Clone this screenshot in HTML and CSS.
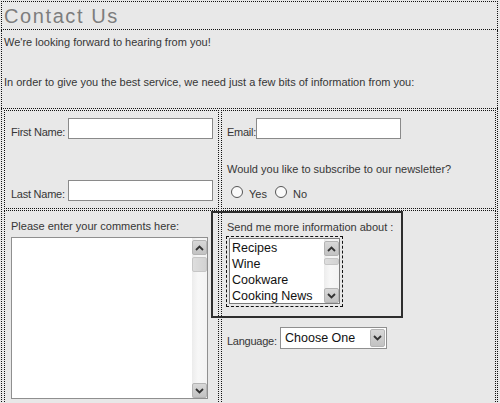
FILE: index.html
```html
<!DOCTYPE html>
<html lang="en">
<head>
<meta charset="utf-8">
<title>Contact Us</title>
<link rel="stylesheet" href="styles.css">
</head>
<body>
<div class="page">
  <div class="header"><h1 class="title">Contact Us</h1></div>
  <div class="intro">
    <p class="intro-line">We're looking forward to hearing from you!</p>
    <p class="intro-line second">In order to give you the best service, we need just a few bits of information from you:</p>
  </div>
  <div class="form-table">
    <div class="cell name-cell">
      <div class="field-row">
        <span class="label name-label">First Name:</span>
        <span class="text-input"></span>
      </div>
      <div class="field-row last-row">
        <span class="label name-label">Last Name:</span>
        <span class="text-input"></span>
      </div>
    </div>
    <div class="cell contact-cell">
      <div class="field-row">
        <span class="label email-label">Email:</span>
        <span class="text-input"></span>
      </div>
      <p class="label question">Would you like to subscribe to our newsletter?</p>
      <div class="radio-row">
        <span class="radio"></span><span class="label radio-text">Yes</span>
        <span class="radio second-radio"></span><span class="label radio-text">No</span>
      </div>
    </div>
    <div class="cell comments-cell">
      <p class="label">Please enter your comments here:</p>
      <div class="textarea">
        <div class="scrollbar">
          <span class="sb-btn"><svg width="9" height="6" viewBox="0 0 9 6"><polyline points="1,5 4.5,1.5 8,5" fill="none" stroke="#333" stroke-width="1.8"/></svg></span>
          <span class="sb-thumb"></span>
          <span class="sb-space"></span>
          <span class="sb-btn"><svg width="9" height="6" viewBox="0 0 9 6"><polyline points="1,1 4.5,4.5 8,1" fill="none" stroke="#333" stroke-width="1.8"/></svg></span>
        </div>
      </div>
    </div>
    <div class="cell info-cell">
      <div class="selection-box"></div>
      <p class="label">Send me more information about :</p>
      <div class="list-outline">
        <div class="listbox">
          <ul class="options">
            <li>Recipes</li>
            <li>Wine</li>
            <li>Cookware</li>
            <li>Cooking News</li>
          </ul>
          <div class="scrollbar list-sb">
            <span class="sb-btn"><svg width="9" height="6" viewBox="0 0 9 6"><polyline points="1,5 4.5,1.5 8,5" fill="none" stroke="#333" stroke-width="1.8"/></svg></span>
            <span class="sb-thumb small"></span>
            <span class="sb-space"></span>
            <span class="sb-btn"><svg width="9" height="6" viewBox="0 0 9 6"><polyline points="1,1 4.5,4.5 8,1" fill="none" stroke="#333" stroke-width="1.8"/></svg></span>
          </div>
        </div>
      </div>
      <div class="field-row language-row">
        <span class="label lang-label">Language:</span>
        <div class="select">
          <span class="select-text">Choose One</span>
          <span class="sb-btn drop-btn"><svg width="9" height="6" viewBox="0 0 9 6"><polyline points="1,1 4.5,4.5 8,1" fill="none" stroke="#333" stroke-width="1.8"/></svg></span>
        </div>
      </div>
    </div>
  </div>
</div>
</body>
</html>
```

FILE: styles.css
```css
html, body {
  margin: 0;
  padding: 0;
  background: #e8e8e8;
  overflow: hidden;
}

body {
  font-family: "Liberation Sans", Arial, sans-serif;
  font-size: 11px;
  color: #363636;
}

p { margin: 0; }

.page {
  margin: 1px 2px 0 1px;
}

.header {
  border: 1px dotted #111;
  height: 27px;
  box-sizing: content-box;
}

.title {
  margin: 0;
  padding: 1px 0 0 2px;
  font-size: 20px;
  line-height: 26px;
  font-weight: normal;
  letter-spacing: 1.6px;
  color: #7d7d7d;
}

.intro {
  border-left: 1px dotted #111;
  border-right: 1px dotted #111;
  height: 78px;
  box-sizing: border-box;
  padding: 6px 0 0 2px;
}

.intro-line {
  line-height: 13px;
}

.intro-line.second {
  margin-top: 27px;
}

.form-table {
  border: 1px dotted #111;
  border-bottom: none;
  padding: 1px 1px 0 2px;
  display: grid;
  grid-template-columns: 215px 275px;
  grid-template-rows: 99px 200px;
  column-gap: 2px;
  row-gap: 1px;
}

.cell {
  border: 1px dotted #111;
  box-sizing: border-box;
  position: relative;
}

.label {
  line-height: 13px;
  color: #363636;
  white-space: nowrap;
}

.field-row {
  display: flex;
  align-items: flex-end;
}

.field-row .label {
  letter-spacing: -0.25px;
}

.name-cell {
  padding: 7px 0 0 6px;
}

.name-label {
  width: 57px;
}

.last-row {
  margin-top: 41px;
}

.text-input {
  display: block;
  width: 145px;
  height: 21px;
  box-sizing: border-box;
  background: #fff;
  border: 1px solid #8a8a8a;
}

.contact-cell {
  padding: 7px 0 0 5px;
}

.email-label {
  width: 29px;
}

.question {
  margin-top: 24px;
}

.radio-row {
  display: flex;
  align-items: flex-start;
  margin-top: 10px;
  padding-left: 4px;
}

.radio {
  display: block;
  width: 12px;
  height: 12px;
  box-sizing: border-box;
  border: 1px solid #555;
  border-radius: 50%;
  background: #fafafa;
}

.second-radio {
  margin-left: 8px;
}

.radio-text {
  margin-top: 2px;
  margin-left: 6px;
}

.comments-cell {
  padding: 9px 0 0 6px;
}

.textarea {
  margin-top: 4px;
  width: 197px;
  height: 162px;
  box-sizing: border-box;
  border: 1px solid #8f8f8f;
  background: #fff;
  display: flex;
  justify-content: flex-end;
}

.scrollbar {
  width: 15px;
  background: linear-gradient(to right, #ececec, #f7f7f7 40%, #f3f3f3);
  display: flex;
  flex-direction: column;
  padding-top: 2px;
  box-sizing: border-box;
}

.sb-btn {
  display: flex;
  align-items: center;
  justify-content: center;
  width: 15px;
  height: 15px;
  box-sizing: border-box;
  border: 1px solid #b4b4b4;
  border-radius: 2px;
  background: linear-gradient(#d8d8d8, #c2c2c2);
}

.sb-thumb {
  display: block;
  width: 15px;
  height: 15px;
  margin-top: 2px;
  box-sizing: border-box;
  border: 1px solid #c6c6c6;
  border-radius: 2px;
  background: linear-gradient(to right, #dedede, #d2d2d2);
}

.sb-thumb.small {
  height: 7px;
}

.sb-space {
  flex: 1;
}

.info-cell {
  padding: 10px 0 0 5px;
}

.selection-box {
  position: absolute;
  left: -11px;
  top: 0;
  width: 192px;
  height: 107px;
  box-sizing: border-box;
  border: 2px solid #2e2e2e;
  pointer-events: none;
}

.list-outline {
  margin: 2px 0 0 -1px;
  width: 117px;
  height: 71px;
  box-sizing: border-box;
  border: 1px dashed #111;
  padding: 1px 2px 2px 2px;
}

.listbox {
  height: 100%;
  box-sizing: border-box;
  border: 1px solid #7c7c7c;
  background: #fff;
  display: flex;
  justify-content: space-between;
}

.options {
  list-style: none;
  margin: 0;
  padding: 1px 0 0 2px;
  font-size: 12.5px;
  line-height: 16px;
  color: #111;
  white-space: nowrap;
  overflow: hidden;
}

.list-sb {
  height: 100%;
}

.language-row {
  margin-top: 20px;
}

.lang-label {
  width: 53px;
  margin-bottom: 1px;
}

.select {
  width: 107px;
  height: 22px;
  box-sizing: border-box;
  border: 1px solid #8f8f8f;
  background: #fff;
  display: flex;
  align-items: center;
  justify-content: space-between;
  padding: 1px 1px 1px 4px;
}

.select-text {
  font-size: 12.5px;
  color: #111;
  line-height: 16px;
}

.drop-btn {
  height: 18px;
}
```
